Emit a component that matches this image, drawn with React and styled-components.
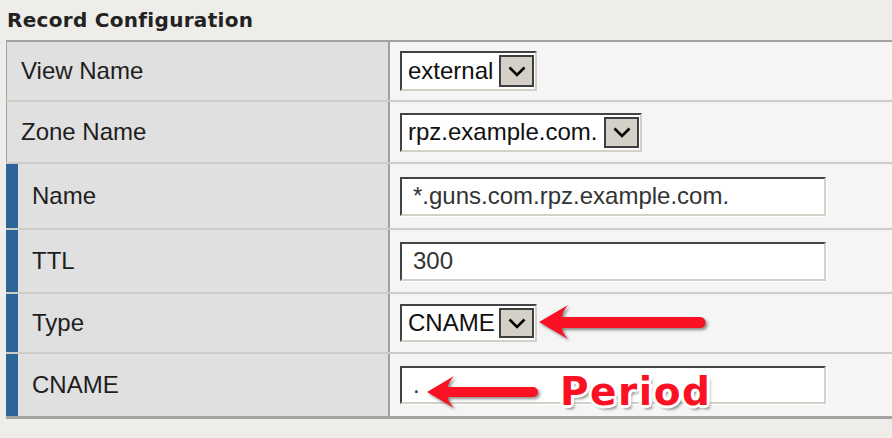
import React from 'react';
import styled, { createGlobalStyle } from 'styled-components';

const GlobalStyle = createGlobalStyle`
  html, body {
    margin: 0;
    padding: 0;
    background: #efede9;
    font-family: "Liberation Sans", Arial, sans-serif;
  }
`;

const Page = styled.div`
  position: relative;
  width: 892px;
  height: 438px;
  overflow: hidden;
`;

const Title = styled.h2`
  box-sizing: border-box;
  margin: 0;
  height: 40px;
  padding: 9px 0 0 7px;
  font-family: "DejaVu Sans", sans-serif;
  font-weight: bold;
  font-size: 20px;
  letter-spacing: 0.3px;
  line-height: 23px;
  color: #222;
`;

const Table = styled.div`
  margin-left: 6px;
  border-top: 2px solid #a3a3a3;
  border-bottom: 3px solid #a3a3a3;
`;

const Row = styled.div`
  box-sizing: border-box;
  display: grid;
  grid-template-columns: 384px 1fr;
  height: ${(p) => p.$h}px;
  border-bottom: ${(p) => (p.$last ? 'none' : '2px solid #cfccc8')};
`;

const Label = styled.div`
  box-sizing: border-box;
  display: flex;
  align-items: center;
  background: #e0e0e0;
  border-left: ${(p) => (p.$marked ? '12px solid #2e6598' : '1px solid #a3a3a3')};
  border-right: 2px solid #a0a0a0;
  padding-left: 14px;
  font-size: 24px;
  color: #1e1e1e;
`;

const Value = styled.div`
  display: flex;
  align-items: center;
  background: #f5f5f5;
  padding-left: 10px;
`;

const SelectBox = styled.div`
  box-sizing: border-box;
  display: flex;
  align-items: stretch;
  width: ${(p) => p.$w}px;
  height: ${(p) => p.$h}px;
  background: #fff;
  border: 2px solid;
  border-color: #444 #d4d0c8 #d4d0c8 #444;
`;

const SelectText = styled.span`
  flex: 1;
  display: flex;
  align-items: center;
  padding-left: 6px;
  font-size: 24px;
  color: #111;
  white-space: nowrap;
`;

const SelectButton = styled.span`
  box-sizing: border-box;
  display: flex;
  align-items: center;
  justify-content: center;
  width: 35px;
  margin: 2px 1px 2px 0;
  background: #d4d0c8;
  border: 2px solid #3e3e3e;
`;

const TextInput = styled.input`
  box-sizing: border-box;
  width: 426px;
  height: ${(p) => p.$h}px;
  margin: 0;
  padding: 0 0 0 11px;
  background: #fff;
  border: 2px solid;
  border-color: #444 #d4d0c8 #d4d0c8 #444;
  box-shadow: 1px 1px 0 #fff;
  font-family: "Liberation Sans", Arial, sans-serif;
  font-size: 24px;
  color: #333;
  outline: none;
`;

const Overlay = styled.svg`
  position: absolute;
  left: 0;
  top: 0;
  pointer-events: none;
  filter: drop-shadow(2px 2px 1.5px rgba(0, 0, 0, 0.45));
`;

const Callout = styled.span`
  position: absolute;
  left: 560px;
  top: 372px;
  font-family: "DejaVu Sans", sans-serif;
  font-weight: bold;
  font-size: 39px;
  letter-spacing: 1.5px;
  line-height: 39px;
  color: #fa1123;
  text-shadow:
    -2px -2px 0 #fff, 2px -2px 0 #fff, -2px 2px 0 #fff, 2px 2px 0 #fff,
    0 -3px 0 #fff, 0 3px 0 #fff, -3px 0 0 #fff, 3px 0 0 #fff,
    3px 4px 3px rgba(0, 0, 0, 0.45);
`;

const Chevron = () => (
  <svg width="18" height="11" viewBox="0 0 18 11">
    <path d="M1.5 1.5 L9 9 L16.5 1.5" fill="none" stroke="#000" strokeWidth="2.6" />
  </svg>
);

const Select = ({ value, w, h }) => (
  <SelectBox $w={w} $h={h}>
    <SelectText>{value}</SelectText>
    <SelectButton>
      <Chevron />
    </SelectButton>
  </SelectBox>
);

export default function App() {
  return (
    <Page>
      <GlobalStyle />
      <Title>Record Configuration</Title>
      <Table>
        <Row $h={60}>
          <Label>View Name</Label>
          <Value><Select value="external" w={137} h={40} /></Value>
        </Row>
        <Row $h={62}>
          <Label>Zone Name</Label>
          <Value><Select value="rpz.example.com." w={242} h={39} /></Value>
        </Row>
        <Row $h={66}>
          <Label $marked>Name</Label>
          <Value><TextInput $h={39} readOnly defaultValue="*.guns.com.rpz.example.com." /></Value>
        </Row>
        <Row $h={64}>
          <Label $marked>TTL</Label>
          <Value><TextInput $h={39} readOnly defaultValue="300" /></Value>
        </Row>
        <Row $h={60}>
          <Label $marked>Type</Label>
          <Value><Select value="CNAME" w={137} h={38} /></Value>
        </Row>
        <Row $h={62} $last>
          <Label $marked>CNAME</Label>
          <Value><TextInput $h={38} readOnly defaultValue="." /></Value>
        </Row>
      </Table>
      <Overlay width="892" height="438" viewBox="0 0 892 438">
        <path
          fill="#fa1123"
          d="M539 322 L568 305 Q562 312 562 317 L700 317 A5.5 5.5 0 0 1 700 328 L562 328 Q562 333 568 339 Z"
        />
        <path
          fill="#fa1123"
          d="M427 392 L454 376 Q448 383 448 387 L533 387 A5 5 0 0 1 533 397 L448 397 Q448 402 454 408 Z"
        />
      </Overlay>
      <Callout>Period</Callout>
    </Page>
  );
}
